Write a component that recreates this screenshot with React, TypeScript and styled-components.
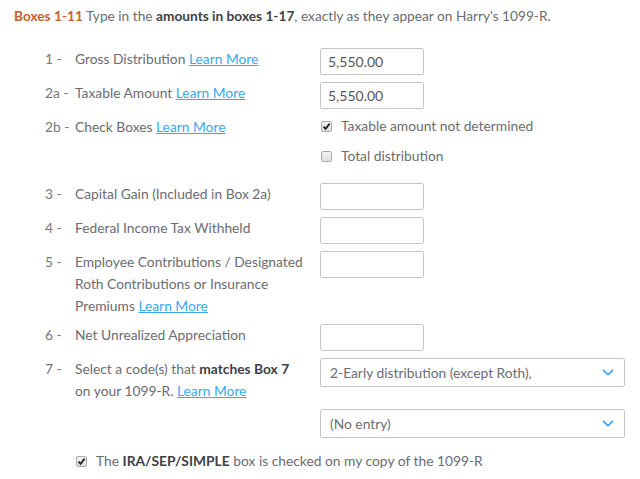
import React from "react";
import styled, { createGlobalStyle } from "styled-components";

const Global = createGlobalStyle`
  html, body { margin: 0; padding: 0; background: #ffffff; }
  body { font-family: Lato, "Open Sans", "Liberation Sans", sans-serif; }
`;

const Page = styled.div`
  padding: 6px 0 0 14px;
  font-size: 13.8px;
  color: #6b6c72;
`;

const Intro = styled.p`
  margin: 0 0 22px 0;
  line-height: 20px;
  font-size: 13.7px;
  color: #6b6c72;
`;

const Accent = styled.strong`
  color: #c4622b;
  font-weight: 700;
`;

const Strong = styled.strong`
  color: #3f4045;
  font-weight: 700;
`;

const Form = styled.div`
  padding-left: 31px;
  display: flex;
  flex-direction: column;
  gap: 7px;
`;

const Row = styled.div<{ $extra?: number }>`
  display: grid;
  grid-template-columns: 30px 245px 1fr;
  align-items: start;
  padding-bottom: ${(p) => p.$extra ?? 0}px;
`;

const Num = styled.span`
  line-height: 22px;
  font-size: 13.8px;
  color: #77787c;
`;

const Label = styled.span`
  line-height: 22px;
  font-size: 13.8px;
  color: #6b6c72;
  padding-right: 8px;
`;

const Link = styled.a`
  color: #3aa8ef;
  text-decoration: underline;
  cursor: pointer;
`;

const Input = styled.div`
  box-sizing: border-box;
  width: 104px;
  height: 27px;
  border: 1px solid #c6c6c6;
  border-radius: 2px;
  padding: 0 7px;
  line-height: 25px;
  font-size: 14px;
  color: #55565a;
`;

const Select = styled.div`
  box-sizing: border-box;
  width: 305px;
  height: 29px;
  border: 1px solid #c6c6c6;
  border-radius: 2px;
  padding: 0 10px 0 9px;
  display: flex;
  align-items: center;
  justify-content: space-between;
  font-size: 13.8px;
  color: #6b6c72;
`;

const Checks = styled.div`
  display: flex;
  flex-direction: column;
  gap: 10px;
`;

const CheckItem = styled.label`
  display: flex;
  align-items: center;
  gap: 9px;
  line-height: 20px;
  font-size: 13.8px;
  color: #6b6c72;
`;

const Box = styled.span`
  box-sizing: border-box;
  width: 11px;
  height: 11px;
  border: 1px solid #a9a9a9;
  border-radius: 2px;
  background: linear-gradient(#f4f4f4, #dedede);
  display: inline-flex;
  align-items: center;
  justify-content: center;
  margin-left: 1px;
`;

const Footer = styled.div`
  padding: 6px 0 0 30px;
`;

const Check = ({ checked }: { checked?: boolean }) => (
  <Box>
    {checked && (
      <svg width="9" height="9" viewBox="0 0 9 9">
        <path d="M1.5 4.6 L3.6 6.8 L7.6 1.6" fill="none" stroke="#222" strokeWidth="1.8" />
      </svg>
    )}
  </Box>
);

const Chevron = () => (
  <svg width="12" height="7" viewBox="0 0 12 7">
    <path d="M1 1 L6 5.6 L11 1" fill="none" stroke="#3aa8ef" strokeWidth="1.7" />
  </svg>
);

const Empty = () => <span />;

export default function App() {
  return (
    <>
      <Global />
      <Page>
        <Intro>
          <Accent>Boxes 1-11</Accent> Type in the <Strong>amounts in boxes 1-17</Strong>, exactly as they appear on Harry's 1099-R.
        </Intro>
        <Form>
          <Row>
            <Num>1 -</Num>
            <Label>
              Gross Distribution <Link>Learn More</Link>
            </Label>
            <Input>5,550.00</Input>
          </Row>
          <Row>
            <Num>2a -</Num>
            <Label>
              Taxable Amount <Link>Learn More</Link>
            </Label>
            <Input>5,550.00</Input>
          </Row>
          <Row $extra={10}>
            <Num>2b -</Num>
            <Label>
              Check Boxes <Link>Learn More</Link>
            </Label>
            <Checks>
              <CheckItem>
                <Check checked />
                Taxable amount not determined
              </CheckItem>
              <CheckItem>
                <Check />
                Total distribution
              </CheckItem>
            </Checks>
          </Row>
          <Row>
            <Num>3 -</Num>
            <Label>Capital Gain (Included in Box 2a)</Label>
            <Input />
          </Row>
          <Row>
            <Num>4 -</Num>
            <Label>Federal Income Tax Withheld</Label>
            <Input />
          </Row>
          <Row>
            <Num>5 -</Num>
            <Label>
              Employee Contributions / Designated Roth Contributions or Insurance Premiums <Link>Learn More</Link>
            </Label>
            <Input />
          </Row>
          <Row>
            <Num>6 -</Num>
            <Label>Net Unrealized Appreciation</Label>
            <Input />
          </Row>
          <Row>
            <Num>7 -</Num>
            <Label>
              Select a code(s) that <Strong>matches Box 7</Strong>
              <br />
              on your 1099-R. <Link>Learn More</Link>
            </Label>
            <Select>
              <span>2-Early distribution (except Roth),</span>
              <Chevron />
            </Select>
          </Row>
          <Row>
            <Empty />
            <Empty />
            <Select>
              <span>(No entry)</span>
              <Chevron />
            </Select>
          </Row>
          <Footer>
            <CheckItem>
              <Check checked />
              <span>
                The <Strong>IRA/SEP/SIMPLE</Strong> box is checked on my copy of the 1099-R
              </span>
            </CheckItem>
          </Footer>
        </Form>
      </Page>
    </>
  );
}
